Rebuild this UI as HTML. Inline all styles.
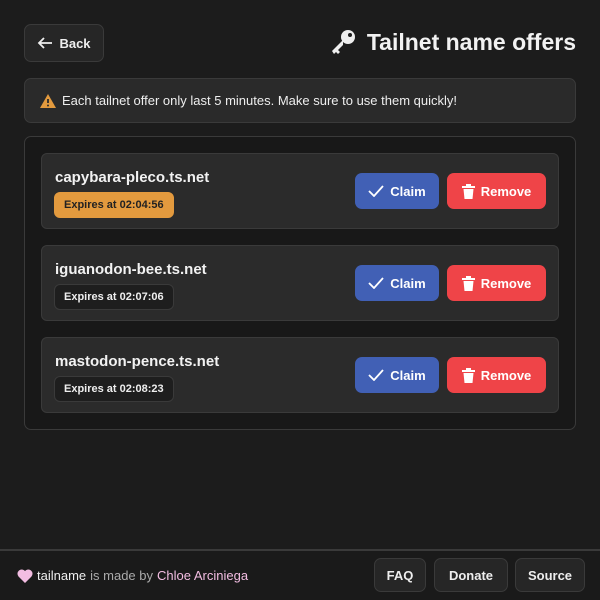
<!DOCTYPE html>
<html><head><style>
*{box-sizing:border-box;margin:0;padding:0}
body{width:600px;height:600px;background:#1c1c1c;font-family:"Liberation Sans",sans-serif;color:#eee;position:relative;overflow:hidden}
.btn{position:absolute;border:1px solid #3a3a3a;background:#262626;border-radius:7px;color:#eee;font-weight:bold;font-size:13px;display:flex;align-items:center;justify-content:center}
.alert{position:absolute;left:24px;top:78px;width:552px;height:45px;background:#2a2a2a;border:1px solid #3a3a3a;border-radius:7px;font-size:13px;display:flex;align-items:center;padding-left:14px;color:#eee}
.box{position:absolute;left:24px;top:136px;width:552px;height:294px;background:#181818;border:1px solid #3a3a3a;border-radius:7px}
.card{position:absolute;left:16px;width:518px;height:76px;background:#2b2b2b;border:1px solid #3a3a3a;border-radius:6px}
.name{position:absolute;left:13px;top:15px;font-size:15px;font-weight:bold;color:#f2f2f2}
.badge{position:absolute;left:12px;top:38px;height:26px;padding:0 9px;border-radius:6px;font-size:11px;font-weight:bold;display:flex;align-items:center;background:#1e1e1e;border:1px solid #3a3a3a;color:#eee}
.badge.o{background:#e39a3e;border-color:#e39a3e;color:#222}
.claim,.rem{position:absolute;top:19px;height:36px;border-radius:7px;color:#fff;font-size:13px;font-weight:bold;display:flex;align-items:center;justify-content:center;gap:6px}
.claim{left:313px;width:84px;background:#4160b5}
.rem{left:405px;width:99px;background:#ef4448}
</style></head><body>
<div class="btn" style="left:24px;top:24px;width:80px;height:38px;gap:6px"><svg width="16" height="14" viewBox="0 0 16 14"><path d="M15 7H2M7 2L2 7l5 5" stroke="#eee" stroke-width="1.8" fill="none"/></svg>Back</div>
<div style="position:absolute;right:24px;top:28px;font-size:23px;font-weight:bold;display:flex;align-items:center;gap:10px;color:#f2f2f2">
<svg width="28" height="28" viewBox="0 0 28 28"><circle cx="19" cy="9" r="7" fill="#eee"/><circle cx="21" cy="7" r="2" fill="#1c1c1c"/><path d="M14 12L3 23l2 3 2-2 2 2 2-2-2-2 5-5" fill="#eee"/></svg>Tailnet name offers</div>
<div class="alert"><svg width="18" height="16" viewBox="0 0 18 16" style="margin-right:5px"><path d="M9 1L17 15H1z" fill="#e39a3e"/><path d="M9 6v4" stroke="#2a2a2a" stroke-width="1.8"/><circle cx="9" cy="12.5" r="1" fill="#2a2a2a"/></svg>Each tailnet offer only last 5 minutes. Make sure to use them quickly!</div>
<div class="box">
<div class="card" style="top:16px"><div class="name">capybara-pleco.ts.net</div><div class="badge o">Expires at 02:04:56</div>
<div class="claim"><svg width="16" height="12" viewBox="0 0 16 12"><path d="M1 6l5 5L15 1" stroke="#fff" stroke-width="1.8" fill="none"/></svg>Claim</div>
<div class="rem"><svg width="13" height="15" viewBox="0 0 13 15"><path d="M0 2h13v2H0zM4 0h5v2H4zM1.5 5h10l-1 10h-8z" fill="#fff"/></svg>Remove</div></div>
<div class="card" style="top:108px"><div class="name">iguanodon-bee.ts.net</div><div class="badge">Expires at 02:07:06</div>
<div class="claim"><svg width="16" height="12" viewBox="0 0 16 12"><path d="M1 6l5 5L15 1" stroke="#fff" stroke-width="1.8" fill="none"/></svg>Claim</div>
<div class="rem"><svg width="13" height="15" viewBox="0 0 13 15"><path d="M0 2h13v2H0zM4 0h5v2H4zM1.5 5h10l-1 10h-8z" fill="#fff"/></svg>Remove</div></div>
<div class="card" style="top:200px"><div class="name">mastodon-pence.ts.net</div><div class="badge">Expires at 02:08:23</div>
<div class="claim"><svg width="16" height="12" viewBox="0 0 16 12"><path d="M1 6l5 5L15 1" stroke="#fff" stroke-width="1.8" fill="none"/></svg>Claim</div>
<div class="rem"><svg width="13" height="15" viewBox="0 0 13 15"><path d="M0 2h13v2H0zM4 0h5v2H4zM1.5 5h10l-1 10h-8z" fill="#fff"/></svg>Remove</div></div>
</div>
<div style="position:absolute;left:0;top:549px;width:600px;height:51px;background:#1a1a1a;border-top:2px solid #3a3a3a"></div>
<div style="position:absolute;left:17px;top:568px;font-size:13px;display:flex;align-items:center;gap:4px;color:#aaa"><svg width="16" height="15" viewBox="0 0 16 15"><path d="M8 15L1.5 8.5A4 4 0 0 1 8 3a4 4 0 0 1 6.5 5.5z" fill="#f3bde2"/></svg><span style="color:#eee">tailname</span> is made by <span style="color:#f3bde2">Chloe Arciniega</span></div>
<div class="btn" style="left:374px;top:558px;width:52px;height:34px">FAQ</div>
<div class="btn" style="left:434px;top:558px;width:74px;height:34px">Donate</div>
<div class="btn" style="left:515px;top:558px;width:70px;height:34px">Source</div>
</body></html>
